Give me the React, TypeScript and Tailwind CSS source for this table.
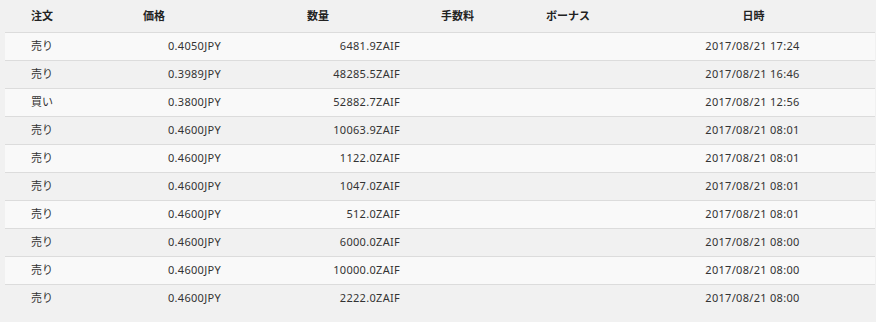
const rows = [
  { side: "売り", price: "0.4050JPY", amount: "6481.9ZAIF", date: "2017/08/21 17:24" },
  { side: "売り", price: "0.3989JPY", amount: "48285.5ZAIF", date: "2017/08/21 16:46" },
  { side: "買い", price: "0.3800JPY", amount: "52882.7ZAIF", date: "2017/08/21 12:56" },
  { side: "売り", price: "0.4600JPY", amount: "10063.9ZAIF", date: "2017/08/21 08:01" },
  { side: "売り", price: "0.4600JPY", amount: "1122.0ZAIF", date: "2017/08/21 08:01" },
  { side: "売り", price: "0.4600JPY", amount: "1047.0ZAIF", date: "2017/08/21 08:01" },
  { side: "売り", price: "0.4600JPY", amount: "512.0ZAIF", date: "2017/08/21 08:01" },
  { side: "売り", price: "0.4600JPY", amount: "6000.0ZAIF", date: "2017/08/21 08:00" },
  { side: "売り", price: "0.4600JPY", amount: "10000.0ZAIF", date: "2017/08/21 08:00" },
  { side: "売り", price: "0.4600JPY", amount: "2222.0ZAIF", date: "2017/08/21 08:00" },
];

const cols = "grid grid-cols-[112px_130px_179px_94px_110px_245px]";

export default function App() {
  return (
    <div
      className="bg-[#f1f1f1] pl-[5px] pb-[10px] text-[11px] text-[#333]"
      style={{ fontFamily: '"Noto Sans", "Noto Sans CJK JP", sans-serif' }}
    >
      <div className="w-[870px]">
        <div className={`${cols} h-[32px] items-center font-bold text-[#222]`}>
          <div className="pl-[26px]">注文</div>
          <div className="pl-[26px]">価格</div>
          <div className="pl-[60px]">数量</div>
          <div className="pl-[15px]">手数料</div>
          <div className="pl-[26px]">ボーナス</div>
          <div className="text-center pl-[2px]">日時</div>
        </div>
        {rows.map((r, i) => (
          <div
            key={i}
            className={`${cols} h-[28px] items-center border-t border-[#dcdcdc] ${
              i % 2 === 0 ? "bg-[#f9f9f9]" : "bg-[#f1f1f1]"
            }`}
          >
            <div className="pl-[26px]">{r.side}</div>
            <div className="pr-[26px] text-right tracking-[0.3px]">{r.price}</div>
            <div className="pr-[26px] text-right tracking-[0.3px]">{r.amount}</div>
            <div></div>
            <div></div>
            <div className="text-center tracking-[0.3px]">{r.date}</div>
          </div>
        ))}
      </div>
    </div>
  );
}
